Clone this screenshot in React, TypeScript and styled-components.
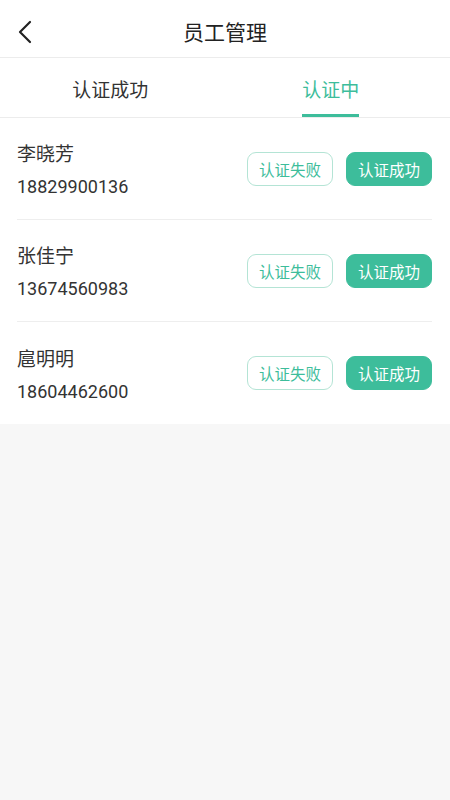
import React, { useState } from "react";
import styled, { createGlobalStyle } from "styled-components";

const GlobalStyle = createGlobalStyle`
  html, body {
    margin: 0;
    padding: 0;
    background: #f7f7f7;
    font-family: "Noto Sans CJK SC", "Noto Sans", sans-serif;
  }
`;

const Page = styled.div`
  width: 450px;
  min-height: 800px;
  background: #f7f7f7;
`;

const Header = styled.div`
  height: 57px;
  background: #fff;
  border-bottom: 1px solid #ececec;
  display: flex;
  align-items: center;
  justify-content: center;
  position: relative;

  h1 {
    margin: 4px 0 0;
    font-size: 21px;
    font-weight: 400;
    color: #222;
  }
`;

const BackButton = styled.button`
  position: absolute;
  left: 12px;
  top: 18px;
  border: 0;
  background: none;
  padding: 0;
  width: 26px;
  height: 28px;
  display: flex;
  align-items: center;
  justify-content: center;
`;

const Tabs = styled.div`
  height: 59px;
  background: #fff;
  border-bottom: 1px solid #ececec;
  display: flex;
  padding-right: 9px;
`;

const Tab = styled.button<{ $active: boolean }>`
  flex: 1;
  border: 0;
  background: none;
  padding: 0;
  font-family: inherit;
  font-size: 19px;
  color: ${(p) => (p.$active ? "#3dbd9b" : "#333")};
  display: flex;
  align-items: center;
  justify-content: center;

  span {
    display: block;
    height: 59px;
    line-height: 61px;
    box-sizing: border-box;
    border-bottom: 3px solid ${(p) => (p.$active ? "#3dbd9b" : "transparent")};
  }
`;

const List = styled.div`
  background: #fff;
  padding: 0 18px 0 17px;
`;

const Row = styled.div<{ $last: boolean }>`
  height: 102px;
  box-sizing: border-box;
  display: flex;
  align-items: center;
  border-bottom: ${(p) => (p.$last ? "0" : "1px solid #eeeeee")};
`;

const Info = styled.div`
  flex: 1;
  display: flex;
  flex-direction: column;
  gap: 9px;
  margin-top: 2px;
`;

const Name = styled.div`
  font-size: 19px;
  color: #333;
  line-height: 26px;
`;

const Phone = styled.div`
  font-family: Roboto, "Noto Sans CJK SC", sans-serif;
  font-size: 18px;
  color: #333;
  line-height: 24px;
`;

const Actions = styled.div`
  display: flex;
  gap: 13px;
`;

const ActionButton = styled.button<{ $primary?: boolean }>`
  width: 86px;
  height: 34px;
  border-radius: 9px;
  box-sizing: border-box;
  font-family: inherit;
  font-size: 15.5px;
  padding: 0;
  border: 1px solid ${(p) => (p.$primary ? "#3dbd9b" : "#b4e4d5")};
  background: ${(p) => (p.$primary ? "#3dbd9b" : "#fff")};
  color: ${(p) => (p.$primary ? "#fff" : "#3dbd9b")};
`;

const staff = [
  { name: "李晓芳", phone: "18829900136" },
  { name: "张佳宁", phone: "13674560983" },
  { name: "扈明明", phone: "18604462600" },
];

export default function App() {
  const [tab, setTab] = useState(1);

  return (
    <Page>
      <GlobalStyle />
      <Header>
        <BackButton>
          <svg width="14" height="24" viewBox="0 0 14 24">
            <path d="M12 2 L2 12 L12 22" fill="none" stroke="#222" strokeWidth="2.2" strokeLinecap="round" strokeLinejoin="round" />
          </svg>
        </BackButton>
        <h1>员工管理</h1>
      </Header>
      <Tabs>
        {["认证成功", "认证中"].map((t, i) => (
          <Tab key={t} $active={tab === i} onClick={() => setTab(i)}>
            <span>{t}</span>
          </Tab>
        ))}
      </Tabs>
      <List>
        {staff.map((s, i) => (
          <Row key={s.phone} $last={i === staff.length - 1}>
            <Info>
              <Name>{s.name}</Name>
              <Phone>{s.phone}</Phone>
            </Info>
            <Actions>
              <ActionButton>认证失败</ActionButton>
              <ActionButton $primary>认证成功</ActionButton>
            </Actions>
          </Row>
        ))}
      </List>
    </Page>
  );
}
